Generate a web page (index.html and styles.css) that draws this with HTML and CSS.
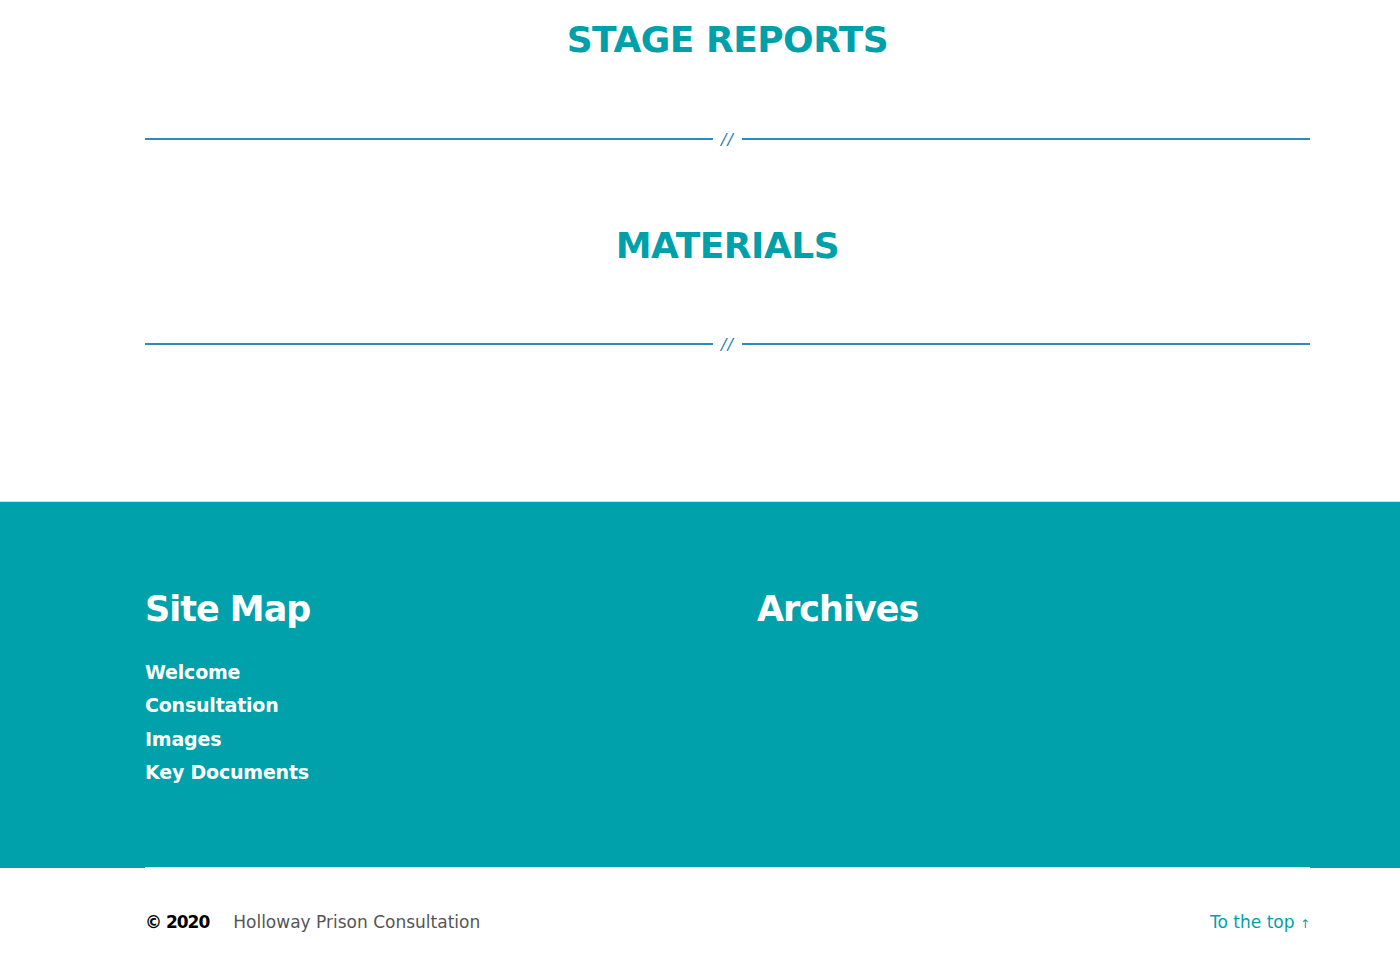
FILE: index.html
```html
<!DOCTYPE html>
<html lang="en">
<head>
<meta charset="utf-8">
<title>Holloway Prison Consultation</title>
<link rel="stylesheet" href="styles.css">
</head>
<body>
<main class="content">
  <section class="block block-first">
    <h2 class="block-title">STAGE REPORTS</h2>
    <div class="divider"><span class="divider-line"></span><span class="divider-mark">//</span><span class="divider-line"></span></div>
  </section>
  <section class="block">
    <h2 class="block-title">MATERIALS</h2>
    <div class="divider"><span class="divider-line"></span><span class="divider-mark">//</span><span class="divider-line"></span></div>
  </section>
</main>
<footer class="site-footer">
  <div class="footer-inner">
    <div class="footer-col">
      <h3 class="footer-title">Site Map</h3>
      <ul class="footer-links">
        <li><a href="#">Welcome</a></li>
        <li><a href="#">Consultation</a></li>
        <li><a href="#">Images</a></li>
        <li><a href="#">Key Documents</a></li>
      </ul>
    </div>
    <div class="footer-col">
      <h3 class="footer-title">Archives</h3>
    </div>
  </div>
</footer>
<div class="bottom-bar">
  <div class="bottom-left">
    <span class="copy">© 2020</span>
    <span class="site-name">Holloway Prison Consultation</span>
  </div>
  <a class="to-top" href="#">To the top <span class="arrow">↑</span></a>
</div>
</body>
</html>
```
FILE: styles.css
```css
* { box-sizing: border-box; }
body {
  margin: 0;
  background: #fff;
  font-family: "DejaVu Sans", "Noto Sans", sans-serif;
}
.content {
  margin-left: 145px;
  width: 1165px;
  padding-bottom: 139px;
}
.block {
  display: flex;
  flex-direction: column;
  align-items: stretch;
  padding-top: 66px;
}
.block-first { padding-top: 17px; }
.block-title {
  margin: 0 0 57px;
  text-align: center;
  color: #00a0aa;
  font-size: 36px;
  font-weight: 700;
  line-height: 46px;
  letter-spacing: -0.5px;
}
.block-first .block-title { margin-bottom: 58px; }
.divider {
  display: flex;
  align-items: center;
  height: 36px;
}
.divider-line {
  flex: 1;
  height: 1.5px;
  background: #2b8cba;
}
.divider-mark {
  padding: 0 8px;
  color: #2b7fb0;
  font-size: 16px;
  font-style: italic;
  letter-spacing: 1px;
}
.site-footer {
  background: #00a1ab;
  border-top: 1px solid #d9dcd9;
}
.footer-inner {
  margin-left: 145px;
  width: 1165px;
  display: grid;
  grid-template-columns: 612px 1fr;
  padding: 82px 0 78px;
  border-bottom: 1px solid #d7efe9;
}
.footer-title {
  margin: 0 0 22px;
  color: #fff;
  font-size: 35px;
  font-weight: 700;
  line-height: 50px;
  letter-spacing: -1px;
}
.footer-links {
  list-style: none;
  margin: 0;
  padding: 0;
}
.footer-links li { font-size: 19px; line-height: 33.3px; }
.footer-links a {
  color: #fff;
  text-decoration: none;
  font-size: 19px;
  font-weight: 700;
  letter-spacing: -0.2px;
}
.bottom-bar {
  margin-left: 145px;
  width: 1165px;
  display: flex;
  justify-content: space-between;
  align-items: flex-start;
  padding-top: 44px;
  height: 110px;
  font-size: 17px;
}
.bottom-left { display: flex; gap: 24px; }
.copy { color: #000; font-weight: 700; letter-spacing: -1px; }
.site-name { color: #555; }
.to-top { color: #00a0aa; text-decoration: none; }
.arrow { font-size: 12px; }
```
